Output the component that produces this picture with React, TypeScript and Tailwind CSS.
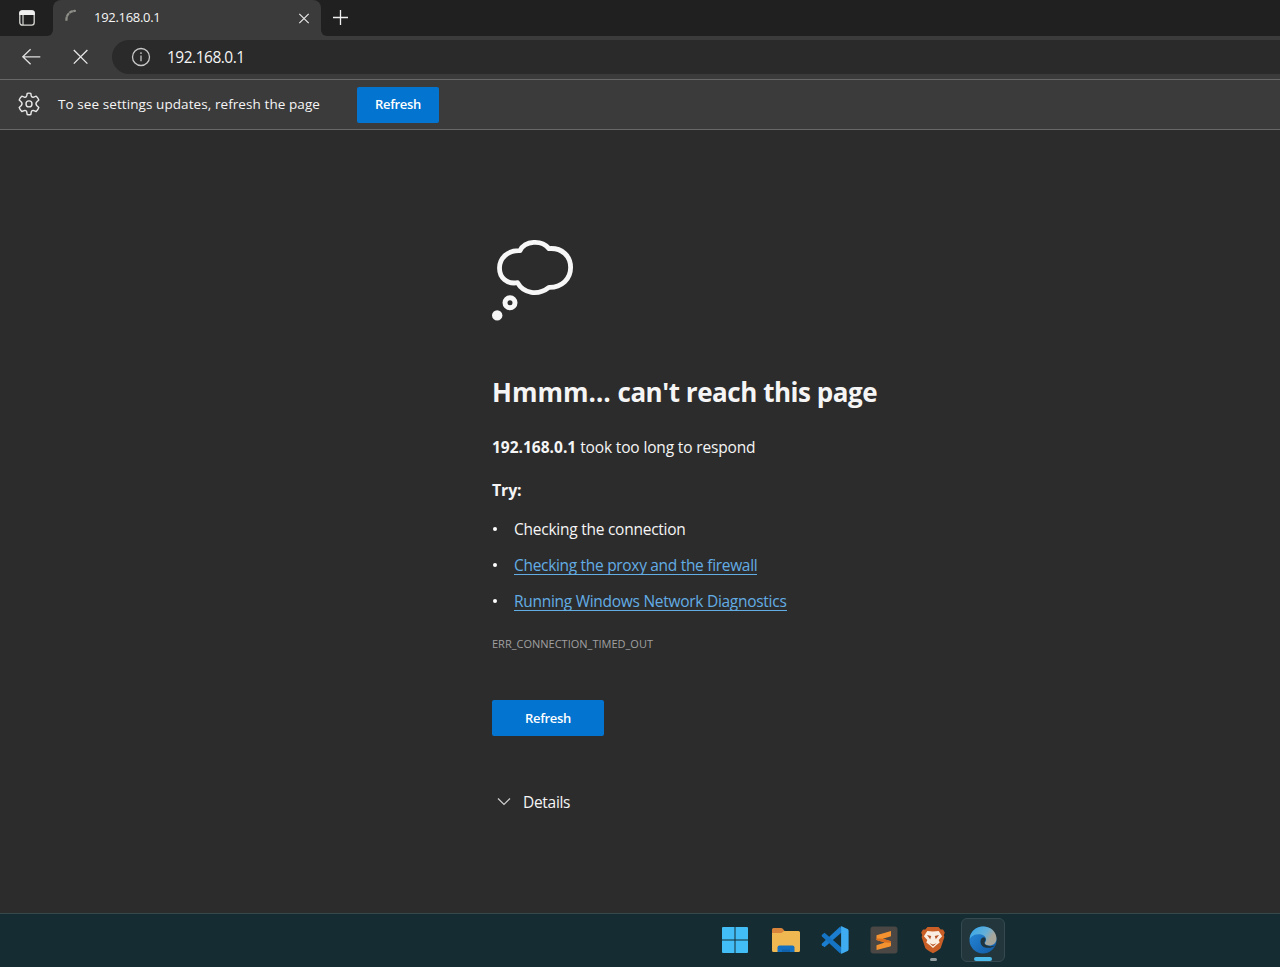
import React from "react";

function TabStrip() {
  return (
    <div className="flex h-9 bg-[#3b3b3b]">
      <button className="flex w-[53px] items-center justify-center rounded-br-md bg-[#202020] text-[#f0f0f0]">
        <svg width="18" height="18" viewBox="0 0 18 18" fill="none">
          <rect x="1.8" y="1.8" width="14.4" height="14.4" rx="2.6" stroke="#d8d8d4" strokeWidth="1.3" />
          <path d="M1.2 4.2Q1.2 1.2 4.2 1.2h9.6q3 0 3 3v1.8H1.2z" fill="currentColor" />
          <path d="M5 6v10" stroke="#d8d8d4" strokeWidth="1.2" />
        </svg>
      </button>
      <div className="flex w-[268px] bg-[#202020]">
        <div className="flex flex-1 items-center rounded-t-lg bg-[#3b3b3b] pl-3">
          <svg width="18" height="18" viewBox="0 0 18 18" fill="none" className="-mt-0.5">
            <path d="M1.6 12.8A8.3 8.3 0 0 1 10.8 3" stroke="#8f8f89" strokeWidth="2.2" strokeDasharray="3.9 .4" />
          </svg>
          <span className="-mt-0.5 ml-[11px] flex-1 text-[13px] leading-5 tracking-[-0.3px]">192.168.0.1</span>
          <button className="mr-[9px] flex size-4 items-center justify-center">
            <svg width="12" height="12" viewBox="0 0 12 12" stroke="#e8e8e8" strokeWidth="1.2">
              <path d="M1.3 1.8l9.4 9.4M10.7 1.8l-9.4 9.4" />
            </svg>
          </button>
        </div>
      </div>
      <button className="flex flex-1 items-center rounded-bl-md bg-[#202020] pl-3">
        <svg width="16" height="16" viewBox="0 0 16 16" stroke="#f0f0f0" strokeWidth="1.3">
          <path d="M7.5 0v15M0 7.5h15" />
        </svg>
      </button>
    </div>
  );
}

function Toolbar() {
  return (
    <div className="flex h-11 items-start border-b border-[#686868] bg-[#3b3b3b] pt-1">
      <button className="ml-5 flex h-[34px] w-6 items-center">
        <svg width="22" height="20" viewBox="0 0 22 20" fill="none" stroke="#e0e0e0" strokeWidth="1.3">
          <path d="M20.3 9.8H2.8M10.6 2.3L2.8 9.8l7.8 7.5" />
        </svg>
      </button>
      <button className="ml-[29px] flex h-[34px] w-4 items-center">
        <svg width="16" height="16" viewBox="0 0 16 16" stroke="#e8e8e8" strokeWidth="1.3">
          <path d="M.8 1l13.6 13.6M14.4 1L.8 14.6" />
        </svg>
      </button>
      <div className="ml-[23px] flex h-[34px] flex-1 items-center rounded-l-full bg-[#2a2a2a] pl-[19px]">
        <svg width="20" height="20" viewBox="0 0 20 20" fill="none" stroke="#c8c8c8" strokeWidth="1.3">
          <circle cx="10" cy="10" r="8.5" />
          <path d="M10 8.6v5.6" />
          <circle cx="10" cy="6.1" r=".5" fill="#c8c8c8" strokeWidth=".8" />
        </svg>
        <span className="ml-4 text-[15.5px] leading-6 tracking-[-0.5px]">192.168.0.1</span>
      </div>
    </div>
  );
}

function SettingsBar() {
  return (
    <div className="flex h-[50px] items-center border-b border-[#686868] bg-[#3b3b3b] pl-[17px]">
      <svg width="24" height="24" viewBox="0 0 24 24" fill="none" stroke="#e8e8e8" strokeWidth="1.4" strokeLinejoin="round" className="-mt-px">
        <path d="M9.8 3.5 10.2 1.4Q12 .8 13.8 1.4L14.3 4 Q14.7 5.4 16.1 5.3L19.2 4.2Q20.9 5.7 21.8 8L19.7 9.9Q18.2 11.5 19.7 13.5L21.8 15.5Q20.9 18 19.2 19.5L16.1 18.4Q14.7 18.3 14.3 19.8L13.8 22.5Q12 23 10.2 22.5L9.7 19.8Q9.3 18.3 7.9 18.4L4.8 19.5Q3.1 18 2.2 15.5L4.3 13.5Q5.8 11.5 4.3 9.9L2.2 8Q3.1 5.7 4.8 4.2L7.9 5.3Q9.3 5.4 9.8 3.5z" />
        <circle cx="12" cy="11.9" r="3" />
      </svg>
      <span className="-mt-0.5 ml-[17px] w-[299px] text-[13.5px] leading-5 tracking-[0.08px] whitespace-nowrap">To see settings updates, refresh the page</span>
      <button className="h-9 w-[82px] rounded-xs bg-[#0374cf] text-[13px] font-semibold tracking-[-0.3px] text-white">Refresh</button>
    </div>
  );
}

function ErrorPage() {
  return (
    <main className="flex flex-1 flex-col items-start bg-[#2c2c2c] pt-[109px] pl-[492px] text-[15.5px] leading-6">
      <svg width="82" height="84" viewBox="0 0 82 84" fill="none" stroke="#f7f7f7" className="shrink-0">
        <path d="M28 11.6C33 1.6 49.5 .6 57 9.6c13-1 21.6 7.4 21.6 18.8S70 48.4 57 48.3C46 57 31.5 54.6 25.5 43.7 14.8 45.4 7.5 38.8 7.5 29s8.3-18 20.5-17.4z" strokeWidth="4.8" strokeLinejoin="round" />
        <circle cx="18" cy="63.7" r="5" strokeWidth="5" />
        <circle cx="5.2" cy="76.4" r="5.2" fill="#f7f7f7" stroke="none" />
      </svg>
      <h1 className="mt-[51px] h-9 text-[26px] leading-9 font-bold whitespace-nowrap">
        Hmmm… <span className="tracking-[-0.46px]">can't reach this page</span>
      </h1>
      <p className="mt-[25px] whitespace-nowrap">
        <b>192.168.0.1</b> <span className="tracking-[-0.15px]">took too long to respond</span>
      </p>
      <p className="mt-[19px] text-base leading-6 font-bold tracking-[-0.2px]">Try:</p>
      <ul className="mt-[14px] flex flex-col gap-3 whitespace-nowrap tracking-[-0.25px]">
        <li className="flex h-6 items-center">
          <span className="mt-0.5 mr-[15px] ml-[1px] size-1 rounded-full bg-white" />
          <span className="mt-0.5 ml-0.5">Checking the connection</span>
        </li>
        <li className="flex h-6 items-center">
          <span className="mt-0.5 mr-[15px] ml-[1px] size-1 rounded-full bg-white" />
          <a className="ml-0.5 h-[22px] border-b border-[#63ade5] leading-6 tracking-[-0.31px] text-[#63ade5]">Checking the proxy and the firewall</a>
        </li>
        <li className="flex h-6 items-center">
          <span className="mt-0.5 mr-[15px] ml-[1px] size-1 rounded-full bg-white" />
          <a className="ml-0.5 h-[22px] border-b border-[#63ade5] leading-6 tracking-[-0.28px] text-[#63ade5]">Running Windows Network Diagnostics</a>
        </li>
      </ul>
      <p className="mt-[22px] text-[11px] leading-5 text-[#a0a0a0]">ERR_CONNECTION_TIMED_OUT</p>
      <button className="mt-[46px] h-9 w-28 shrink-0 rounded-xs bg-[#0374cf] text-[13px] font-semibold tracking-[-0.3px] text-white">Refresh</button>
      <button className="mt-[54px] flex h-6 items-center pl-[5px]">
        <svg width="14" height="10" viewBox="0 0 14 10" fill="none" stroke="#d0d0d0" strokeWidth="1.2">
          <path d="M1 1.5l6 6 6-6" />
        </svg>
        <span className="ml-3 tracking-[-0.3px]">Details</span>
      </button>
    </main>
  );
}

function Taskbar() {
  return (
    <footer className="flex h-[54px] items-start border-t border-[#35484a] bg-[#152d32] pt-1 pl-[713px]">
      <div className="flex h-11 w-[44px] items-center justify-center">
        <svg width="26" height="26" viewBox="0 0 26 26" fill="#42bdf5">
          <path d="M0 1Q0 0 1 0h11.5v12.5H0zM13.5 0H25q1 0 1 1v11.5H13.5zM0 13.5h12.5V26H1q-1 0-1-1zM13.5 13.5H26V25q0 1-1 1H13.5z" />
        </svg>
      </div>
      <div className="ml-[7px] flex h-11 w-11 items-center justify-center">
        <svg width="28" height="26" viewBox="0 0 28 26">
          <path d="M0 2.5Q0 1 1.5 1H9q1.2 0 2 1l2 2.5V9H0z" fill="#d8843a" />
          <path d="M0 6h9.5L12 4h14.5Q28 4 28 5.5v18Q28 25 26.5 25h-25Q0 25 0 23.5z" fill="#f0b850" />
          <path d="M5.5 25v-4.5q0-2 2-2h13q2 0 2 2V25z" fill="#1470c0" />
          <path d="M10 25v-1.6q0-.9.9-.9h6.2q.9 0 .9.9V25z" fill="#0f62ab" />
        </svg>
      </div>
      <div className="ml-[5px] flex h-11 w-11 items-center justify-center">
        <svg width="28" height="28" viewBox="0 0 28 28">
          <path d="M20.5 6.5 3.6 21.2 1 19.2q-.8-.8 0-1.6L18.7.9l2.3 1z" fill="#1b7ed0" />
          <path d="M20.5 21.5 3.6 6.8 1 8.8q-.8.8 0 1.6l17.7 16.7 2.3-1z" fill="#1674c5" />
          <path d="M19.5.6q.7-.6 1.6-.2l5.5 2.7q1 .5 1 1.6v18.6q0 1.1-1 1.6l-5.5 2.7q-1 .3-1.6-.3l.6-1.3V2z" fill="#3fabf0" />
        </svg>
      </div>
      <div className="ml-[5px] flex h-11 w-11 items-center justify-center">
        <svg width="28" height="28" viewBox="0 0 28 28">
          <rect x=".5" y=".5" width="27" height="27" rx="3" fill="#4a4745" />
          <path d="M6.5 9.3 21 5v5.2l-8.2 2.6 8.2 2.5v4.2q0 .7-.8 1L6.5 24v-4.8l8.2-2.6-8.2-2.5z" fill="#f59230" />
          <path d="m12.8 12.8 8.2 2.5v1.5l-6.3-.2-8.2-2.5v-1.6z" fill="#d86e20" />
        </svg>
      </div>
      <div className="ml-[5px] flex h-11 w-11 flex-col items-center pt-2">
        <svg width="24" height="28" viewBox="0 0 24 28">
          <path d="M6.5 1h11l2.2 2.6 2.3-.2 1.8 3.2-1 2.6.6 1.8-3.7 11Q19.3 23.3 12 27.3 4.7 23.3 4.3 22L.6 11l.6-1.8-1-2.6L2 3.4l2.3.2z" fill="#c95f26" />
          <path d="M12 5.5 17.7 5l3.4 5.3-3.4 3.8 1 2.5-3.3 2.5L12 22l-3.4-2.9-3.3-2.5 1-2.5-3.4-3.8L6.3 5z" fill="#f9eee1" />
          <path d="m6 9 4.2 1-1 3.3zm12 0-4.2 1 1 3.3zM8.5 17.2l3.5 1.2 3.5-1.2-3.5 3z" fill="#b75427" />
        </svg>
        <span className="mt-1 h-[3px] w-[7px] rounded-full bg-[#929b9d]" />
      </div>
      <div className="ml-[6px] flex h-11 w-11 flex-col items-center rounded-md border border-[#344a50] bg-[#22363c] pt-[7px]">
        <svg width="28" height="28" viewBox="0 0 28 28">
          <defs>
            <linearGradient id="ring" x1=".1" x2="1" y1=".2" y2=".65">
              <stop offset="0" stopColor="#3fa9e6" />
              <stop offset=".5" stopColor="#64afd8" />
              <stop offset=".8" stopColor="#a7a69b" />
            </linearGradient>
            <linearGradient id="wave" x1="0" x2="1" y1="0" y2="1">
              <stop offset="0" stopColor="#278bdc" />
              <stop offset="1" stopColor="#1159a3" />
            </linearGradient>
          </defs>
          <circle cx="14" cy="14" r="13.5" fill="url(#wave)" />
          <path d="M.6 13C1.3 5.7 7 .5 14 .5c8 0 13.5 5.6 13.5 12 0 4.8-3.4 7-7 7-3 0-4.8-1.1-4.8-2.2 0-.8 1.4-1.3 1.4-3.8 0-3.5-3.8-5.3-7.3-5.3C5.5 8.2 2.2 9.8.6 13z" fill="url(#ring)" />
          <path d="M15 11.2c-2.6.2-3.5 2.2-3.5 4.5 0 3.8 3.6 6.4 8 6.1 2.5-.1 4.5-1 6.7-2.4-2.2.8-5.4 1.2-8 .2-2.8-1.1-3.4-2.7-2.2-4.3 1.3-1.8.4-3.8-1-4.1z" fill="#20343d" />
        </svg>
        <span className="mt-[3px] h-1 w-[18px] rounded-full bg-[#4ab8e8]" />
      </div>
    </footer>
  );
}

export default function App() {
  return (
    <div className="flex h-[967px] w-[1280px] flex-col overflow-hidden bg-[#2c2c2c] font-['Open_Sans','Noto_Sans',sans-serif] text-[#f5f5f5]">
      <TabStrip />
      <Toolbar />
      <SettingsBar />
      <ErrorPage />
      <Taskbar />
    </div>
  );
}
